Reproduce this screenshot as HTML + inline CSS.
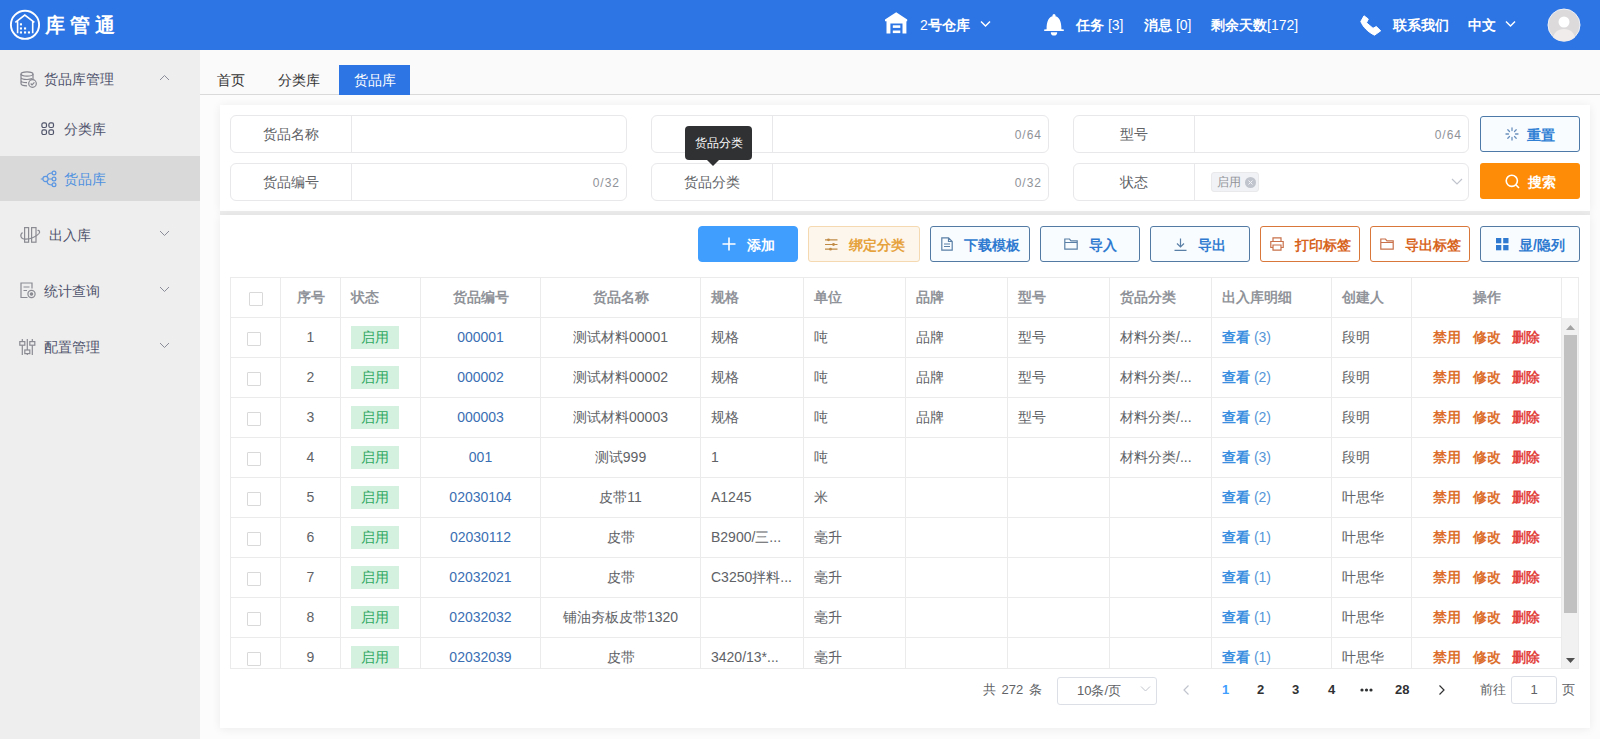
<!DOCTYPE html>
<html><head><meta charset="utf-8">
<style>
*{box-sizing:border-box;margin:0;padding:0}
html,body{width:1600px;height:739px;overflow:hidden}
body{font-family:"Liberation Sans",sans-serif;background:#fcfcfc;position:relative;color:#606266;font-size:14px}
.abs{position:absolute}
svg{display:block}
/* header */
#hdr{position:absolute;left:0;top:0;width:1600px;height:50px;background:#2d75e4;color:#fff}
#hdr .t{position:absolute;top:15px;font-size:14px;line-height:20px;white-space:nowrap;font-weight:bold}
/* sidebar */
#side{position:absolute;left:0;top:50px;width:200px;height:689px;background:#eeeeee}
#side .it{position:absolute;left:0;width:200px;height:44px}
#side .tx{position:absolute;font-size:14px;line-height:20px;color:#4f536c;white-space:nowrap}
/* tabs */
#tabs{position:absolute;left:200px;top:50px;width:1400px;height:45px;background:#fafafa;border-bottom:1px solid #dadada}
#tabs .tb{position:absolute;top:16px;height:28px;line-height:28px;font-size:14px;color:#333;text-align:center}
/* cards */
.card{position:absolute;background:#fff;box-shadow:0 1px 9px rgba(0,0,0,0.07)}
.fld{position:absolute;height:38px;border:1px solid #e8e8eb;border-radius:6px;background:#fff}
.fld .lb{position:absolute;left:0;top:0;width:121px;height:36px;border-right:1px solid #e8e8eb;text-align:center;line-height:36px;font-size:14px;color:#606266}
.fld .cnt{position:absolute;right:6px;top:1px;line-height:36px;font-size:12px;color:#909399;letter-spacing:1px}
.btn{position:absolute;height:36px;border-radius:3px;font-size:14px;font-weight:bold;display:flex;align-items:center;justify-content:center;white-space:nowrap}
.btn svg{margin-right:11px}
</style>
<style>
.tbl{position:absolute;left:230px;top:277px;width:1349px;height:392px;border:1px solid #ebebeb;overflow:hidden;background:#fff}
.cell{position:absolute;top:-1px;height:40px;line-height:40px;white-space:nowrap;overflow:hidden;font-size:14px;color:#606266}
.hd .cell{font-weight:bold;color:#909399}
.row{position:absolute;left:0;width:1331px;height:40px;border-bottom:1px solid #ebebeb}
.vl{position:absolute;top:0;width:1px;background:#ebebeb}
.cb{position:absolute;width:14px;height:14px;border:1px solid #d9d9d9;border-radius:1px;background:#fff}
.tag{display:inline-block;width:48px;height:23px;line-height:23px;text-align:center;background:#d4f1df;color:#2fa862;font-size:14px;vertical-align:middle;margin-top:-2px}
.lnk{color:#3b6fb3}
.see{color:#3b8fe0}
.act1{color:#dd6f2d;font-weight:bold}
.act2{color:#e2433e;font-weight:bold}
.pg{position:absolute;top:680px;line-height:20px;font-size:13px;font-weight:bold;color:#303133}
</style>
</head>
<body>
<!-- HEADER -->
<div id="hdr">
  <svg class="abs" style="left:9px;top:9px" width="32" height="32" viewBox="0 0 32 32">
    <circle cx="16" cy="15.8" r="14.1" fill="none" stroke="#fff" stroke-width="1.9"/>
    <path d="M6.3 13.3 L15.8 6 L25.4 13.3 M8.6 12 V24.3 M23.7 12 V24.3" fill="none" stroke="#fff" stroke-width="1.6"/>
    <g fill="#fff"><rect x="10.9" y="14.3" width="2.1" height="2.1"/><rect x="10.9" y="18.4" width="2.1" height="2.1"/><rect x="10.9" y="22.4" width="2.1" height="2.1"/><rect x="15" y="18.4" width="2.1" height="2.1"/><rect x="15" y="22.4" width="2.1" height="2.1"/><rect x="18.9" y="22.4" width="2.1" height="2.1"/></g>
  </svg>
  <div class="abs" style="left:45px;top:12px;font-size:20px;line-height:26px;letter-spacing:5px;font-weight:bold">库管通</div>

  <svg class="abs" style="left:884px;top:12px" width="24" height="22" viewBox="0 0 24 22">
    <path d="M12.2 0.3 L23.2 7.6 V9.2 H22.4 V21.5 H18.5 V11.6 H6.4 V21.5 H2.5 V9.2 H1 V7.6 Z" fill="#fff"/>
    <rect x="8.8" y="13.3" width="7.5" height="2.6" fill="#fff"/><rect x="8.8" y="18.5" width="7.5" height="2.6" fill="#fff"/>
  </svg>
  <div class="t" style="left:920px"><span style="font-weight:normal">2</span>号仓库</div>
  <svg class="abs" style="left:980px;top:20px" width="11" height="8" viewBox="0 0 11 8"><path d="M1 1.5 L5.5 6 L10 1.5" fill="none" stroke="#fff" stroke-width="1.5"/></svg>

  <svg class="abs" style="left:1044px;top:13px" width="21" height="23" viewBox="0 0 21 23">
    <circle cx="10" cy="2.4" r="1.5" fill="#fff"/>
    <path d="M2.6 16.2 C2.4 8.5 4.8 3 10 3 C15.2 3 17.6 8.5 17.4 16.2 L19.8 16.6 V18 H0.2 V16.6 Z" fill="#fff"/>
    <path d="M6.8 19.2 A3.2 3.4 0 0 0 13.2 19.2 Z" fill="#fff"/>
  </svg>
  <div class="t" style="left:1076px">任务 <span style="font-weight:normal">[3]</span></div>
  <div class="t" style="left:1144px">消息 <span style="font-weight:normal">[0]</span></div>
  <div class="t" style="left:1211px">剩余天数<span style="font-weight:normal">[172]</span></div>

  <svg class="abs" style="left:1358px;top:13px" width="26" height="25" viewBox="0 0 26 25">
    <path d="M2.8 8.5 L6 2.8 L10.3 6 L8.5 9.8 L15 15.3 L18.3 13.5 L22.7 17.8 L16.5 22.2 C10 19 5 14 2.8 8.5 Z" fill="#fff" stroke="#fff" stroke-width="1" stroke-linejoin="round"/>
  </svg>
  <div class="t" style="left:1393px">联系我们</div>
  <div class="t" style="left:1468px">中文</div>
  <svg class="abs" style="left:1505px;top:20px" width="11" height="8" viewBox="0 0 11 8"><path d="M1 1.5 L5.5 6 L10 1.5" fill="none" stroke="#fff" stroke-width="1.5"/></svg>

  <svg class="abs" style="left:1547px;top:8px" width="34" height="34" viewBox="0 0 34 34">
    <defs><clipPath id="av"><circle cx="17" cy="17" r="16.5"/></clipPath></defs>
    <circle cx="17" cy="17" r="16" fill="#dcdada" stroke="#eef0f6" stroke-width="1"/>
    <g clip-path="url(#av)" fill="#fff"><circle cx="17" cy="14" r="5.5"/><path d="M5 34 C6 24 11 21 17 21 C23 21 28 24 29 34Z" fill="#f0ecec"/></g>
  </svg>
</div>

<!-- SIDEBAR -->
<div id="side">
  <div class="it" style="top:106px;background:#d9d9d9;height:45px"></div>
  <svg class="abs" style="left:20px;top:21px" width="17" height="17" viewBox="0 0 17 17">
    <g fill="none" stroke="#85868f" stroke-width="1.2">
      <ellipse cx="7" cy="3" rx="6" ry="2.2"/>
      <path d="M1 3 V12.5 C1 13.8 3.7 14.8 7 14.8 M13 3 V8.5 M1 6.3 C1 7.5 3.7 8.5 7 8.5 C9 8.5 11 8.2 12 7.6 M1 9.5 C1 10.7 3.7 11.7 7 11.7"/>
      <circle cx="12.5" cy="12.5" r="3.8"/>
      <path d="M10.7 12.5 L12 13.8 L14.4 11.3"/>
    </g>
  </svg>
  <div class="tx" style="left:44px;top:19px">货品库管理</div>
  <svg class="abs" style="left:159px;top:24px" width="11" height="7" viewBox="0 0 11 7"><path d="M1 6 L5.5 1.5 L10 6" fill="none" stroke="#8a8c99" stroke-width="1"/></svg>

  <svg class="abs" style="left:41px;top:72px" width="14" height="14" viewBox="0 0 14 14">
    <g fill="none" stroke="#50546a" stroke-width="1.2"><rect x="0.9" y="0.9" width="4.6" height="4.6" rx="1.5"/><rect x="7.9" y="0.9" width="4.6" height="4.6" rx="1.5"/><rect x="0.9" y="7.9" width="4.6" height="4.6" rx="1.5"/><rect x="7.9" y="7.9" width="4.6" height="4.6" rx="1.5"/></g>
  </svg>
  <div class="tx" style="left:64px;top:69px">分类库</div>

  <svg class="abs" style="left:39px;top:119px" width="19" height="20" viewBox="0 0 19 20">
    <g fill="none" stroke="#5a96e2" stroke-width="1.2"><circle cx="6.5" cy="10" r="2.6"/><circle cx="15" cy="4" r="1.9"/><circle cx="15" cy="10" r="1.9"/><circle cx="15" cy="15.8" r="1.9"/><path d="M1.8 10 H3.9 M9.1 10 H13.1 M7.8 7.7 C8.8 4.6 10 4 13.1 4 M7.8 12.3 C8.8 15.4 10 15.8 13.1 15.8"/></g>
  </svg>
  <div class="tx" style="left:64px;top:119px;color:#4d90e0">货品库</div>

  <svg class="abs" style="left:18px;top:174px" width="24" height="22" viewBox="0 0 24 22">
    <g fill="none" stroke="#8a8b93" stroke-width="1.2"><rect x="6.6" y="3.6" width="4" height="14.6"/><rect x="13.6" y="3.6" width="4.4" height="14.6"/><path d="M4.5 8.5 C1.5 11 2.5 15.5 8 15.2 C13 15 19 12 21 9.5 C22.5 7.5 21 6 19.5 6.5"/></g>
  </svg>
  <div class="tx" style="left:49px;top:175px">出入库</div>
  <svg class="abs" style="left:159px;top:180px" width="11" height="7" viewBox="0 0 11 7"><path d="M1 1 L5.5 5.5 L10 1" fill="none" stroke="#8a8c99" stroke-width="1"/></svg>

  <svg class="abs" style="left:20px;top:232px" width="16" height="17" viewBox="0 0 16 17">
    <g fill="none" stroke="#8a8b93" stroke-width="1.2"><path d="M7.5 15.5 H1 V1 H12 V6.5 M3.5 5 H9.5 M3.5 8.5 H7"/><circle cx="11.5" cy="12" r="3.6"/><circle cx="11.5" cy="12" r="1.2" fill="#8a8b93"/></g>
  </svg>
  <div class="tx" style="left:44px;top:231px">统计查询</div>
  <svg class="abs" style="left:159px;top:236px" width="11" height="7" viewBox="0 0 11 7"><path d="M1 1 L5.5 5.5 L10 1" fill="none" stroke="#8a8c99" stroke-width="1"/></svg>

  <svg class="abs" style="left:18px;top:286px" width="18" height="20" viewBox="0 0 18 20">
    <g fill="none" stroke="#8a8b93" stroke-width="1.2"><path d="M4.3 3 V19 M9.3 3 V19 M14.3 3 V19"/><rect x="1.8" y="5.6" width="5" height="3.6" fill="#eee"/><rect x="6.8" y="14" width="5" height="3.6" fill="#eee"/><rect x="11.8" y="5.6" width="5" height="3.6" fill="#eee"/></g>
  </svg>
  <div class="tx" style="left:44px;top:287px">配置管理</div>
  <svg class="abs" style="left:159px;top:292px" width="11" height="7" viewBox="0 0 11 7"><path d="M1 1 L5.5 5.5 L10 1" fill="none" stroke="#8a8c99" stroke-width="1"/></svg>
</div>

<!-- TABS -->
<div id="tabs">
  <div class="tb" style="left:10px;width:42px">首页</div>
  <div class="tb" style="left:68px;width:62px">分类库</div>
  <div class="tb" style="left:139px;top:15px;height:30px;line-height:30px;width:71px;background:#2d75e4;color:#fff">货品库</div>
</div>


<!-- SEARCH CARD -->
<div class="card" style="left:220px;top:105px;width:1370px;height:106px"></div>
<div class="abs" style="left:220px;top:211px;width:1370px;height:4px;background:#ececec"></div>
<div class="fld" style="left:230px;top:115px;width:397px"><div class="lb">货品名称</div></div>
<div class="fld" style="left:651px;top:115px;width:398px"><div class="lb"></div><div class="cnt">0/64</div></div>
<div class="fld" style="left:1073px;top:115px;width:396px"><div class="lb">型号</div><div class="cnt">0/64</div></div>
<div class="fld" style="left:230px;top:163px;width:397px"><div class="lb">货品编号</div><div class="cnt">0/32</div></div>
<div class="fld" style="left:651px;top:163px;width:398px"><div class="lb">货品分类</div><div class="cnt">0/32</div></div>
<div class="fld" style="left:1073px;top:163px;width:396px"><div class="lb">状态</div><div class="abs" style="left:137px;top:8px;width:48px;height:20px;background:#f0f2f5;border:1px solid #e9e9eb;border-radius:3px;font-size:12px;line-height:18px;color:#909399;padding-left:5px">启用<svg class="abs" style="left:33px;top:4px" width="11" height="11" viewBox="0 0 11 11"><circle cx="5.5" cy="5.5" r="5.5" fill="#c0c4cc"/><path d="M3.5 3.5 L7.5 7.5 M7.5 3.5 L3.5 7.5" stroke="#f0f2f5" stroke-width="1"/></svg></div><svg class="abs" style="left:377px;top:14px" width="12" height="7" viewBox="0 0 12 7"><path d="M1 1 L6 6 L11 1" fill="none" stroke="#c0c4cc" stroke-width="1.2"/></svg></div>
<div class="abs" style="left:685px;top:126px;width:67px;height:34px;background:#303133;border-radius:4px;color:#fff;font-size:12px;line-height:34px;text-align:center">货品分类</div>
<svg class="abs" style="left:706px;top:159px" width="14" height="8" viewBox="0 0 14 8"><path d="M0 0 L7 7 L14 0Z" fill="#303133"/></svg>
<div class="btn" style="left:1480px;top:116px;width:100px;background:#f8fcff;border:1px solid #4c79a8;color:#2f80d4"><svg width="14" height="14" viewBox="0 0 14 14" style="margin-right:8px"><g stroke="#6a90bd" stroke-width="1.3" stroke-linecap="round"><path d="M7 1 V3.5 M7 10.5 V13 M1 7 H3.5 M10.5 7 H13 M2.8 2.8 L4.5 4.5 M9.5 9.5 L11.2 11.2 M11.2 2.8 L9.5 4.5 M4.5 9.5 L2.8 11.2"/></g></svg><span style="position:relative;top:2px">重置</span></div>
<div class="btn" style="left:1480px;top:163px;width:100px;background:#ff8c06;color:#fff"><svg width="15" height="15" viewBox="0 0 15 15" style="margin-right:8px"><circle cx="6.8" cy="6.8" r="5.6" fill="none" stroke="#fff" stroke-width="1.6"/><path d="M10.8 10.8 L14 14" stroke="#fff" stroke-width="1.6"/></svg><span style="position:relative;top:2px">搜索</span></div>
<!-- TABLE CARD -->
<div class="card" style="left:220px;top:215px;width:1370px;height:513px"></div>
<div class="btn" style="left:698px;top:226px;width:100px;background:#409eff;color:#fff;border:1px solid #409eff;border-radius:4px"><svg width="14" height="14" viewBox="0 0 14 14"><path d="M7 0.5 V13.5 M0.5 7 H13.5" stroke="#fff" stroke-width="1.6"/></svg><span style="position:relative;top:2px">添加</span></div>
<div class="btn" style="left:808px;top:226px;width:112px;background:#fdf6ec;color:#e6a23c;border:1px solid #f5dab1"><svg width="14" height="13" viewBox="0 0 14 13"><g stroke="#c08a45" stroke-width="1.2" fill="none"><path d="M1 1.8 H13.5 M1 6.5 H13.5 M1 11.2 H13.5"/></g><g fill="#c08a45"><circle cx="4.5" cy="1.8" r="1.4"/><circle cx="9.5" cy="6.5" r="1.4"/><circle cx="6.5" cy="11.2" r="1.4"/></g></svg><span style="position:relative;top:2px">绑定分类</span></div>
<div class="btn" style="left:930px;top:226px;width:100px;background:#f8fcff;color:#2f7ad0;border:1px solid #527aa3"><svg width="12" height="14" viewBox="0 0 12 14"><g stroke="#5a7fa6" stroke-width="1.2" fill="none"><path d="M0.8 0.8 H7.5 L11.2 4.5 V13.2 H0.8Z M7.5 0.8 V4.5 H11.2 M3 7 H9 M3 9.5 H9"/></g></svg><span style="position:relative;top:2px">下载模板</span></div>
<div class="btn" style="left:1040px;top:226px;width:100px;background:#f8fcff;color:#2f7ad0;border:1px solid #527aa3"><svg width="14" height="12" viewBox="0 0 14 12"><path d="M0.8 1 H5.5 L7 2.8 H13.2 V11.2 H0.8Z M0.8 4.5 H13.2" stroke="#5a7fa6" stroke-width="1.2" fill="none"/></svg><span style="position:relative;top:2px">导入</span></div>
<div class="btn" style="left:1150px;top:226px;width:100px;background:#f8fcff;color:#2f7ad0;border:1px solid #527aa3"><svg width="13" height="13" viewBox="0 0 13 13"><path d="M6.5 0.5 V9 M3 5.5 L6.5 9 L10 5.5 M0.5 12.3 H12.5" stroke="#5a7fa6" stroke-width="1.2" fill="none"/></svg><span style="position:relative;top:2px">导出</span></div>
<div class="btn" style="left:1260px;top:226px;width:100px;background:#fff;color:#d8651f;border:1px solid #d9763a"><svg width="14" height="14" viewBox="0 0 14 14"><g stroke="#c8714a" stroke-width="1.2" fill="none"><path d="M3 4.5 V0.8 H11 V4.5 M3 10.5 H0.8 V4.5 H13.2 V10.5 H11 M3 8 H11 V13.2 H3Z"/></g></svg><span style="position:relative;top:2px">打印标签</span></div>
<div class="btn" style="left:1370px;top:226px;width:100px;background:#fff;color:#d8651f;border:1px solid #d9763a"><svg width="14" height="12" viewBox="0 0 14 12"><path d="M0.8 1 H5.5 L7 2.8 H13.2 V11.2 H0.8Z M0.8 4.5 H13.2" stroke="#c8714a" stroke-width="1.2" fill="none"/></svg><span style="position:relative;top:2px">导出标签</span></div>
<div class="btn" style="left:1480px;top:226px;width:100px;background:#f8fcff;color:#2f7ad0;border:1px solid #527aa3"><svg width="13" height="13" viewBox="0 0 13 13" style="position:relative;left:1px"><g fill="#2f7ad0"><rect x="0" y="0" width="5.3" height="5.3"/><rect x="7.2" y="0" width="5.3" height="5.3"/><rect x="0" y="7" width="5.3" height="5.3"/><rect x="7.2" y="7" width="5.3" height="5.3"/></g></svg><span style="position:relative;top:2px">显/隐列</span></div>
<div class="tbl">
<div class="vl" style="left:49px;height:392px"></div>
<div class="vl" style="left:109px;height:392px"></div>
<div class="vl" style="left:189px;height:392px"></div>
<div class="vl" style="left:309px;height:392px"></div>
<div class="vl" style="left:469px;height:392px"></div>
<div class="vl" style="left:572px;height:392px"></div>
<div class="vl" style="left:674px;height:392px"></div>
<div class="vl" style="left:776px;height:392px"></div>
<div class="vl" style="left:878px;height:392px"></div>
<div class="vl" style="left:980px;height:392px"></div>
<div class="vl" style="left:1100px;height:392px"></div>
<div class="vl" style="left:1180px;height:392px"></div>
<div class="vl" style="left:1330px;height:392px"></div>
<div class="row hd" style="top:0px">
<div class="cb" style="left:18px;top:14px"></div>
<div class="cell" style="left:50px;width:59px;text-align:center;">序号</div>
<div class="cell" style="left:110px;width:79px;padding-left:10px;">状态</div>
<div class="cell" style="left:190px;width:119px;text-align:center;">货品编号</div>
<div class="cell" style="left:310px;width:159px;text-align:center;">货品名称</div>
<div class="cell" style="left:470px;width:102px;padding-left:10px;">规格</div>
<div class="cell" style="left:573px;width:101px;padding-left:10px;">单位</div>
<div class="cell" style="left:675px;width:101px;padding-left:10px;">品牌</div>
<div class="cell" style="left:777px;width:101px;padding-left:10px;">型号</div>
<div class="cell" style="left:879px;width:101px;padding-left:10px;">货品分类</div>
<div class="cell" style="left:981px;width:119px;padding-left:10px;">出入库明细</div>
<div class="cell" style="left:1101px;width:79px;padding-left:10px;">创建人</div>
<div class="cell" style="left:1181px;width:149px;text-align:center;">操作</div>
</div>
<div class="row" style="top:40px">
<div class="cb" style="left:16px;top:14px"></div>
<div class="cell" style="left:50px;width:59px;text-align:center;">1</div>
<div class="cell" style="left:110px;width:79px;padding-left:10px;"><span class="tag">启用</span></div>
<div class="cell" style="left:190px;width:119px;text-align:center;"><span class="lnk">000001</span></div>
<div class="cell" style="left:310px;width:159px;text-align:center;">测试材料00001</div>
<div class="cell" style="left:470px;width:102px;padding-left:10px;">规格</div>
<div class="cell" style="left:573px;width:101px;padding-left:10px;">吨</div>
<div class="cell" style="left:675px;width:101px;padding-left:10px;">品牌</div>
<div class="cell" style="left:777px;width:101px;padding-left:10px;">型号</div>
<div class="cell" style="left:879px;width:101px;padding-left:10px;">材料分类/...</div>
<div class="cell" style="left:981px;width:119px;padding-left:10px;"><span class="see"><b>查看</b> <span style="color:#5596d8">(3)</span></span></div>
<div class="cell" style="left:1101px;width:79px;padding-left:10px;">段明</div>
<div class="cell" style="left:1181px;width:149px;text-align:center;"><span class="act1">禁用</span>&nbsp;&nbsp;&nbsp;<span class="act1">修改</span>&nbsp;&nbsp;&nbsp;<span class="act2">删除</span></div>
</div>
<div class="row" style="top:80px">
<div class="cb" style="left:16px;top:14px"></div>
<div class="cell" style="left:50px;width:59px;text-align:center;">2</div>
<div class="cell" style="left:110px;width:79px;padding-left:10px;"><span class="tag">启用</span></div>
<div class="cell" style="left:190px;width:119px;text-align:center;"><span class="lnk">000002</span></div>
<div class="cell" style="left:310px;width:159px;text-align:center;">测试材料00002</div>
<div class="cell" style="left:470px;width:102px;padding-left:10px;">规格</div>
<div class="cell" style="left:573px;width:101px;padding-left:10px;">吨</div>
<div class="cell" style="left:675px;width:101px;padding-left:10px;">品牌</div>
<div class="cell" style="left:777px;width:101px;padding-left:10px;">型号</div>
<div class="cell" style="left:879px;width:101px;padding-left:10px;">材料分类/...</div>
<div class="cell" style="left:981px;width:119px;padding-left:10px;"><span class="see"><b>查看</b> <span style="color:#5596d8">(2)</span></span></div>
<div class="cell" style="left:1101px;width:79px;padding-left:10px;">段明</div>
<div class="cell" style="left:1181px;width:149px;text-align:center;"><span class="act1">禁用</span>&nbsp;&nbsp;&nbsp;<span class="act1">修改</span>&nbsp;&nbsp;&nbsp;<span class="act2">删除</span></div>
</div>
<div class="row" style="top:120px">
<div class="cb" style="left:16px;top:14px"></div>
<div class="cell" style="left:50px;width:59px;text-align:center;">3</div>
<div class="cell" style="left:110px;width:79px;padding-left:10px;"><span class="tag">启用</span></div>
<div class="cell" style="left:190px;width:119px;text-align:center;"><span class="lnk">000003</span></div>
<div class="cell" style="left:310px;width:159px;text-align:center;">测试材料00003</div>
<div class="cell" style="left:470px;width:102px;padding-left:10px;">规格</div>
<div class="cell" style="left:573px;width:101px;padding-left:10px;">吨</div>
<div class="cell" style="left:675px;width:101px;padding-left:10px;">品牌</div>
<div class="cell" style="left:777px;width:101px;padding-left:10px;">型号</div>
<div class="cell" style="left:879px;width:101px;padding-left:10px;">材料分类/...</div>
<div class="cell" style="left:981px;width:119px;padding-left:10px;"><span class="see"><b>查看</b> <span style="color:#5596d8">(2)</span></span></div>
<div class="cell" style="left:1101px;width:79px;padding-left:10px;">段明</div>
<div class="cell" style="left:1181px;width:149px;text-align:center;"><span class="act1">禁用</span>&nbsp;&nbsp;&nbsp;<span class="act1">修改</span>&nbsp;&nbsp;&nbsp;<span class="act2">删除</span></div>
</div>
<div class="row" style="top:160px">
<div class="cb" style="left:16px;top:14px"></div>
<div class="cell" style="left:50px;width:59px;text-align:center;">4</div>
<div class="cell" style="left:110px;width:79px;padding-left:10px;"><span class="tag">启用</span></div>
<div class="cell" style="left:190px;width:119px;text-align:center;"><span class="lnk">001</span></div>
<div class="cell" style="left:310px;width:159px;text-align:center;">测试999</div>
<div class="cell" style="left:470px;width:102px;padding-left:10px;">1</div>
<div class="cell" style="left:573px;width:101px;padding-left:10px;">吨</div>
<div class="cell" style="left:675px;width:101px;padding-left:10px;"></div>
<div class="cell" style="left:777px;width:101px;padding-left:10px;"></div>
<div class="cell" style="left:879px;width:101px;padding-left:10px;">材料分类/...</div>
<div class="cell" style="left:981px;width:119px;padding-left:10px;"><span class="see"><b>查看</b> <span style="color:#5596d8">(3)</span></span></div>
<div class="cell" style="left:1101px;width:79px;padding-left:10px;">段明</div>
<div class="cell" style="left:1181px;width:149px;text-align:center;"><span class="act1">禁用</span>&nbsp;&nbsp;&nbsp;<span class="act1">修改</span>&nbsp;&nbsp;&nbsp;<span class="act2">删除</span></div>
</div>
<div class="row" style="top:200px">
<div class="cb" style="left:16px;top:14px"></div>
<div class="cell" style="left:50px;width:59px;text-align:center;">5</div>
<div class="cell" style="left:110px;width:79px;padding-left:10px;"><span class="tag">启用</span></div>
<div class="cell" style="left:190px;width:119px;text-align:center;"><span class="lnk">02030104</span></div>
<div class="cell" style="left:310px;width:159px;text-align:center;">皮带11</div>
<div class="cell" style="left:470px;width:102px;padding-left:10px;">A1245</div>
<div class="cell" style="left:573px;width:101px;padding-left:10px;">米</div>
<div class="cell" style="left:675px;width:101px;padding-left:10px;"></div>
<div class="cell" style="left:777px;width:101px;padding-left:10px;"></div>
<div class="cell" style="left:879px;width:101px;padding-left:10px;"></div>
<div class="cell" style="left:981px;width:119px;padding-left:10px;"><span class="see"><b>查看</b> <span style="color:#5596d8">(2)</span></span></div>
<div class="cell" style="left:1101px;width:79px;padding-left:10px;">叶思华</div>
<div class="cell" style="left:1181px;width:149px;text-align:center;"><span class="act1">禁用</span>&nbsp;&nbsp;&nbsp;<span class="act1">修改</span>&nbsp;&nbsp;&nbsp;<span class="act2">删除</span></div>
</div>
<div class="row" style="top:240px">
<div class="cb" style="left:16px;top:14px"></div>
<div class="cell" style="left:50px;width:59px;text-align:center;">6</div>
<div class="cell" style="left:110px;width:79px;padding-left:10px;"><span class="tag">启用</span></div>
<div class="cell" style="left:190px;width:119px;text-align:center;"><span class="lnk">02030112</span></div>
<div class="cell" style="left:310px;width:159px;text-align:center;">皮带</div>
<div class="cell" style="left:470px;width:102px;padding-left:10px;">B2900/三...</div>
<div class="cell" style="left:573px;width:101px;padding-left:10px;">毫升</div>
<div class="cell" style="left:675px;width:101px;padding-left:10px;"></div>
<div class="cell" style="left:777px;width:101px;padding-left:10px;"></div>
<div class="cell" style="left:879px;width:101px;padding-left:10px;"></div>
<div class="cell" style="left:981px;width:119px;padding-left:10px;"><span class="see"><b>查看</b> <span style="color:#5596d8">(1)</span></span></div>
<div class="cell" style="left:1101px;width:79px;padding-left:10px;">叶思华</div>
<div class="cell" style="left:1181px;width:149px;text-align:center;"><span class="act1">禁用</span>&nbsp;&nbsp;&nbsp;<span class="act1">修改</span>&nbsp;&nbsp;&nbsp;<span class="act2">删除</span></div>
</div>
<div class="row" style="top:280px">
<div class="cb" style="left:16px;top:14px"></div>
<div class="cell" style="left:50px;width:59px;text-align:center;">7</div>
<div class="cell" style="left:110px;width:79px;padding-left:10px;"><span class="tag">启用</span></div>
<div class="cell" style="left:190px;width:119px;text-align:center;"><span class="lnk">02032021</span></div>
<div class="cell" style="left:310px;width:159px;text-align:center;">皮带</div>
<div class="cell" style="left:470px;width:102px;padding-left:10px;">C3250拌料...</div>
<div class="cell" style="left:573px;width:101px;padding-left:10px;">毫升</div>
<div class="cell" style="left:675px;width:101px;padding-left:10px;"></div>
<div class="cell" style="left:777px;width:101px;padding-left:10px;"></div>
<div class="cell" style="left:879px;width:101px;padding-left:10px;"></div>
<div class="cell" style="left:981px;width:119px;padding-left:10px;"><span class="see"><b>查看</b> <span style="color:#5596d8">(1)</span></span></div>
<div class="cell" style="left:1101px;width:79px;padding-left:10px;">叶思华</div>
<div class="cell" style="left:1181px;width:149px;text-align:center;"><span class="act1">禁用</span>&nbsp;&nbsp;&nbsp;<span class="act1">修改</span>&nbsp;&nbsp;&nbsp;<span class="act2">删除</span></div>
</div>
<div class="row" style="top:320px">
<div class="cb" style="left:16px;top:14px"></div>
<div class="cell" style="left:50px;width:59px;text-align:center;">8</div>
<div class="cell" style="left:110px;width:79px;padding-left:10px;"><span class="tag">启用</span></div>
<div class="cell" style="left:190px;width:119px;text-align:center;"><span class="lnk">02032032</span></div>
<div class="cell" style="left:310px;width:159px;text-align:center;">铺油夯板皮带1320</div>
<div class="cell" style="left:470px;width:102px;padding-left:10px;"></div>
<div class="cell" style="left:573px;width:101px;padding-left:10px;">毫升</div>
<div class="cell" style="left:675px;width:101px;padding-left:10px;"></div>
<div class="cell" style="left:777px;width:101px;padding-left:10px;"></div>
<div class="cell" style="left:879px;width:101px;padding-left:10px;"></div>
<div class="cell" style="left:981px;width:119px;padding-left:10px;"><span class="see"><b>查看</b> <span style="color:#5596d8">(1)</span></span></div>
<div class="cell" style="left:1101px;width:79px;padding-left:10px;">叶思华</div>
<div class="cell" style="left:1181px;width:149px;text-align:center;"><span class="act1">禁用</span>&nbsp;&nbsp;&nbsp;<span class="act1">修改</span>&nbsp;&nbsp;&nbsp;<span class="act2">删除</span></div>
</div>
<div class="row" style="top:360px">
<div class="cb" style="left:16px;top:14px"></div>
<div class="cell" style="left:50px;width:59px;text-align:center;">9</div>
<div class="cell" style="left:110px;width:79px;padding-left:10px;"><span class="tag">启用</span></div>
<div class="cell" style="left:190px;width:119px;text-align:center;"><span class="lnk">02032039</span></div>
<div class="cell" style="left:310px;width:159px;text-align:center;">皮带</div>
<div class="cell" style="left:470px;width:102px;padding-left:10px;">3420/13*...</div>
<div class="cell" style="left:573px;width:101px;padding-left:10px;">毫升</div>
<div class="cell" style="left:675px;width:101px;padding-left:10px;"></div>
<div class="cell" style="left:777px;width:101px;padding-left:10px;"></div>
<div class="cell" style="left:879px;width:101px;padding-left:10px;"></div>
<div class="cell" style="left:981px;width:119px;padding-left:10px;"><span class="see"><b>查看</b> <span style="color:#5596d8">(1)</span></span></div>
<div class="cell" style="left:1101px;width:79px;padding-left:10px;">叶思华</div>
<div class="cell" style="left:1181px;width:149px;text-align:center;"><span class="act1">禁用</span>&nbsp;&nbsp;&nbsp;<span class="act1">修改</span>&nbsp;&nbsp;&nbsp;<span class="act2">删除</span></div>
</div>
<div class="abs" style="left:1331px;top:40px;width:17px;height:351px;background:#f1f1f1"></div>
<div class="abs" style="left:1333px;top:57px;width:13px;height:278px;background:#c1c1c1"></div>
<svg class="abs" style="left:1335px;top:47px" width="9" height="5" viewBox="0 0 9 5"><path d="M0 5 L4.5 0 L9 5Z" fill="#a3a3a3"/></svg>
<svg class="abs" style="left:1335px;top:380px" width="9" height="5" viewBox="0 0 9 5"><path d="M0 0 L4.5 5 L9 0Z" fill="#505050"/></svg>
</div>
<div class="abs" style="left:983px;top:680px;font-size:13px;line-height:20px;color:#606266;word-spacing:2px">共 272 条</div>
<div class="abs" style="left:1057px;top:677px;width:100px;height:28px;border:1px solid #dcdfe6;border-radius:3px;font-size:13px;line-height:26px;color:#606266;padding-left:19px">10条/页<svg class="abs" style="left:82px;top:8px" width="11" height="6" viewBox="0 0 11 6"><path d="M1 0.5 L5.5 5 L10 0.5" fill="none" stroke="#c0c4cc" stroke-width="1"/></svg></div>
<svg class="abs" style="left:1182px;top:684px" width="8" height="12" viewBox="0 0 8 12"><path d="M6.5 1.5 L2 6 L6.5 10.5" fill="none" stroke="#c0c4cc" stroke-width="1.2"/></svg>
<div class="pg" style="left:1222px;color:#409eff">1</div>
<div class="pg" style="left:1257px;color:#303133">2</div>
<div class="pg" style="left:1292px;color:#303133">3</div>
<div class="pg" style="left:1328px;color:#303133">4</div>
<div class="pg" style="left:1395px;color:#303133">28</div>
<svg class="abs" style="left:1360px;top:688px" width="13" height="4" viewBox="0 0 13 4"><g fill="#303133"><circle cx="2" cy="2" r="1.6"/><circle cx="6.5" cy="2" r="1.6"/><circle cx="11" cy="2" r="1.6"/></g></svg>
<svg class="abs" style="left:1438px;top:684px" width="8" height="12" viewBox="0 0 8 12"><path d="M1.5 1.5 L6 6 L1.5 10.5" fill="none" stroke="#303133" stroke-width="1.2"/></svg>
<div class="abs" style="left:1480px;top:680px;font-size:13px;line-height:20px;color:#606266">前往</div>
<div class="abs" style="left:1511px;top:676px;width:46px;height:28px;border:1px solid #dcdfe6;border-radius:3px;font-size:13px;line-height:26px;color:#606266;text-align:center">1</div>
<div class="abs" style="left:1562px;top:680px;font-size:13px;line-height:20px;color:#606266">页</div>
</body></html>
